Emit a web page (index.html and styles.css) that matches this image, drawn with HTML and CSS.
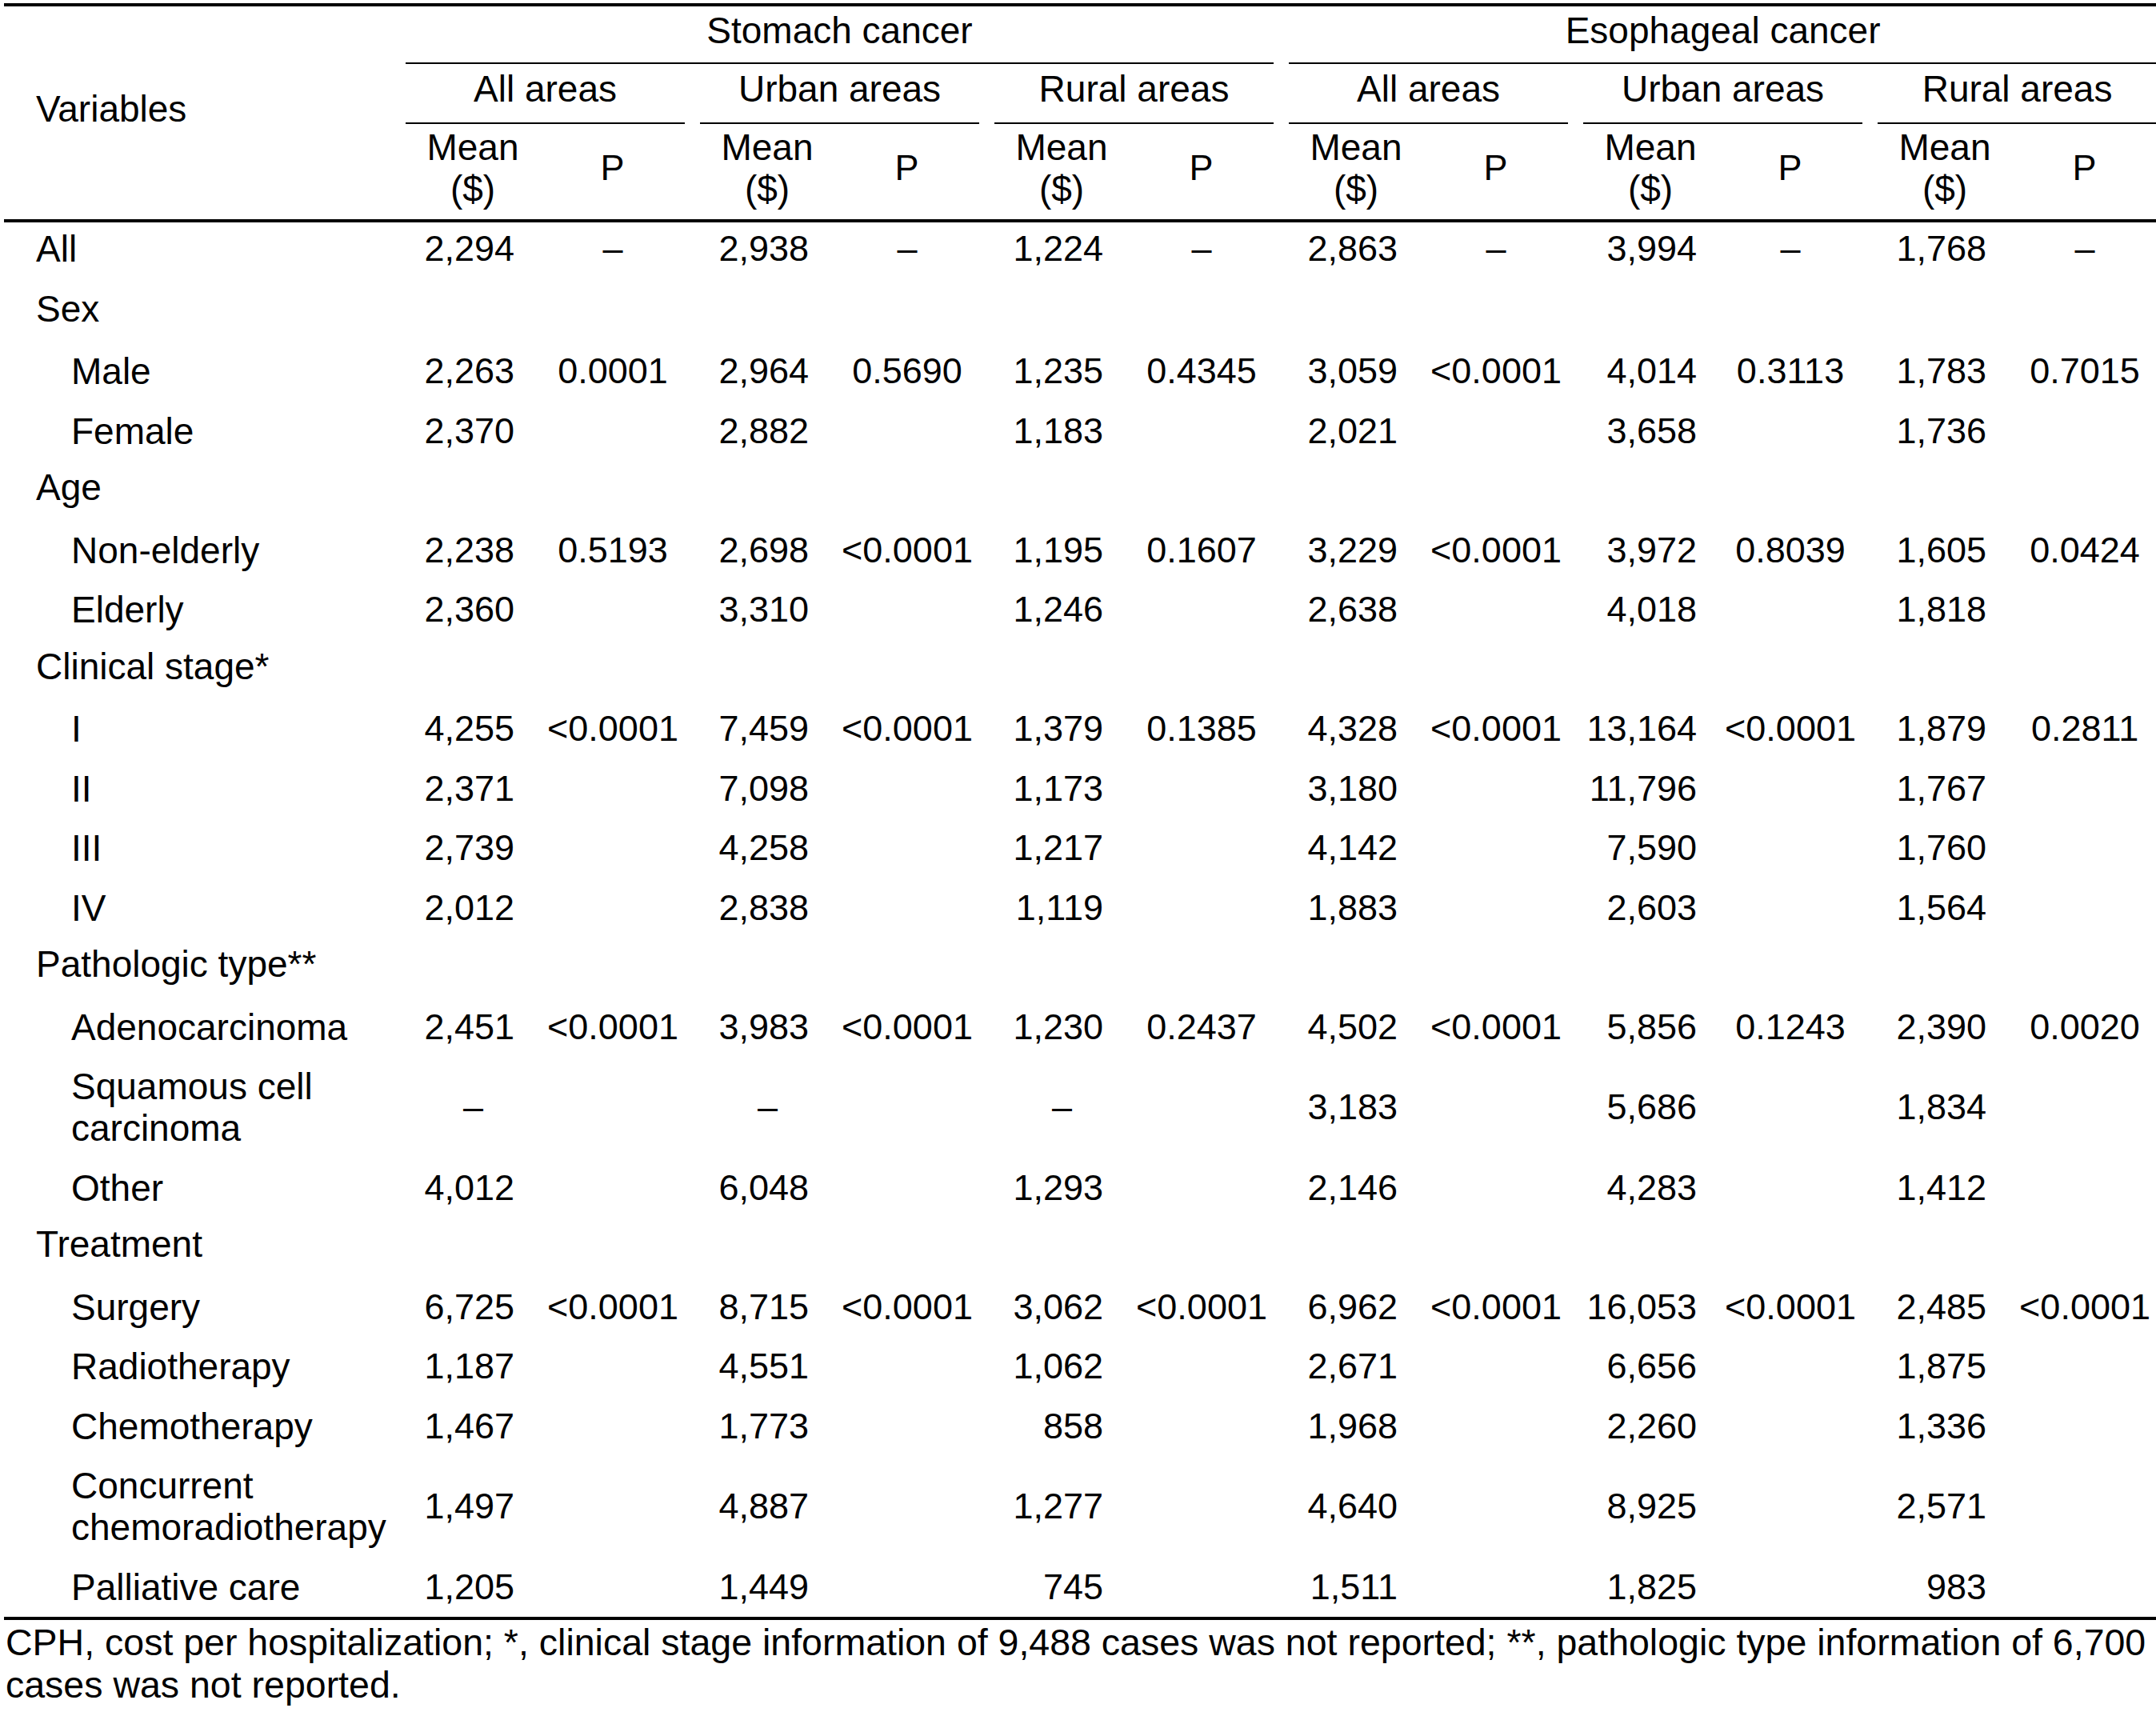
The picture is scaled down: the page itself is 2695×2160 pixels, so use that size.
FILE: index.html
```html
<!DOCTYPE html>
<html lang="en">
<head>
<meta charset="utf-8">
<title>CPH table</title>
<link rel="stylesheet" href="styles.css">
</head>
<body>
<div class="page">
<table class="data">
<colgroup>
<col class="c-var">
<col class="c-mean"><col class="c-p">
<col class="c-mean"><col class="c-p">
<col class="c-mean"><col class="c-p">
<col class="c-mean"><col class="c-p">
<col class="c-mean"><col class="c-p">
<col class="c-mean"><col class="c-p">
</colgroup>
<thead>
<tr>
<th class="h-var" rowspan="3">Variables</th>
<th class="h-span" colspan="6"><div class="ln ln-1">Stomach cancer</div></th>
<th class="h-span" colspan="6"><div class="ln ln-1">Esophageal cancer</div></th>
</tr>
<tr>
<th class="h-span" colspan="2"><div class="ln ln-2">All areas</div></th>
<th class="h-span" colspan="2"><div class="ln ln-2">Urban areas</div></th>
<th class="h-span" colspan="2"><div class="ln ln-2">Rural areas</div></th>
<th class="h-span" colspan="2"><div class="ln ln-2">All areas</div></th>
<th class="h-span" colspan="2"><div class="ln ln-2">Urban areas</div></th>
<th class="h-span" colspan="2"><div class="ln ln-2">Rural areas</div></th>
</tr>
<tr>
<th class="h-sub h-mean">Mean<br>($)</th><th class="h-sub h-p">P</th>
<th class="h-sub h-mean">Mean<br>($)</th><th class="h-sub h-p">P</th>
<th class="h-sub h-mean">Mean<br>($)</th><th class="h-sub h-p">P</th>
<th class="h-sub h-mean">Mean<br>($)</th><th class="h-sub h-p">P</th>
<th class="h-sub h-mean">Mean<br>($)</th><th class="h-sub h-p">P</th>
<th class="h-sub h-mean">Mean<br>($)</th><th class="h-sub h-p">P</th>
</tr>
</thead>
<tbody>
<tr class="first"><td class="var">All</td><td class="mean">2,294</td><td class="p">–</td><td class="mean">2,938</td><td class="p">–</td><td class="mean">1,224</td><td class="p">–</td><td class="mean">2,863</td><td class="p">–</td><td class="mean w">3,994</td><td class="p">–</td><td class="mean">1,768</td><td class="p">–</td></tr>
<tr class="cat"><td class="var">Sex</td><td></td><td></td><td></td><td></td><td></td><td></td><td></td><td></td><td></td><td></td><td></td><td></td></tr>
<tr><td class="var sub">Male</td><td class="mean">2,263</td><td class="p">0.0001</td><td class="mean">2,964</td><td class="p">0.5690</td><td class="mean">1,235</td><td class="p">0.4345</td><td class="mean">3,059</td><td class="p">&lt;0.0001</td><td class="mean w">4,014</td><td class="p">0.3113</td><td class="mean">1,783</td><td class="p">0.7015</td></tr>
<tr><td class="var sub">Female</td><td class="mean">2,370</td><td class="p"></td><td class="mean">2,882</td><td class="p"></td><td class="mean">1,183</td><td class="p"></td><td class="mean">2,021</td><td class="p"></td><td class="mean w">3,658</td><td class="p"></td><td class="mean">1,736</td><td class="p"></td></tr>
<tr class="cat"><td class="var">Age</td><td></td><td></td><td></td><td></td><td></td><td></td><td></td><td></td><td></td><td></td><td></td><td></td></tr>
<tr><td class="var sub">Non-elderly</td><td class="mean">2,238</td><td class="p">0.5193</td><td class="mean">2,698</td><td class="p">&lt;0.0001</td><td class="mean">1,195</td><td class="p">0.1607</td><td class="mean">3,229</td><td class="p">&lt;0.0001</td><td class="mean w">3,972</td><td class="p">0.8039</td><td class="mean">1,605</td><td class="p">0.0424</td></tr>
<tr><td class="var sub">Elderly</td><td class="mean">2,360</td><td class="p"></td><td class="mean">3,310</td><td class="p"></td><td class="mean">1,246</td><td class="p"></td><td class="mean">2,638</td><td class="p"></td><td class="mean w">4,018</td><td class="p"></td><td class="mean">1,818</td><td class="p"></td></tr>
<tr class="cat"><td class="var">Clinical stage*</td><td></td><td></td><td></td><td></td><td></td><td></td><td></td><td></td><td></td><td></td><td></td><td></td></tr>
<tr><td class="var sub">I</td><td class="mean">4,255</td><td class="p">&lt;0.0001</td><td class="mean">7,459</td><td class="p">&lt;0.0001</td><td class="mean">1,379</td><td class="p">0.1385</td><td class="mean">4,328</td><td class="p">&lt;0.0001</td><td class="mean w">13,164</td><td class="p">&lt;0.0001</td><td class="mean">1,879</td><td class="p">0.2811</td></tr>
<tr><td class="var sub">II</td><td class="mean">2,371</td><td class="p"></td><td class="mean">7,098</td><td class="p"></td><td class="mean">1,173</td><td class="p"></td><td class="mean">3,180</td><td class="p"></td><td class="mean w">11,796</td><td class="p"></td><td class="mean">1,767</td><td class="p"></td></tr>
<tr><td class="var sub">III</td><td class="mean">2,739</td><td class="p"></td><td class="mean">4,258</td><td class="p"></td><td class="mean">1,217</td><td class="p"></td><td class="mean">4,142</td><td class="p"></td><td class="mean w">7,590</td><td class="p"></td><td class="mean">1,760</td><td class="p"></td></tr>
<tr><td class="var sub">IV</td><td class="mean">2,012</td><td class="p"></td><td class="mean">2,838</td><td class="p"></td><td class="mean">1,119</td><td class="p"></td><td class="mean">1,883</td><td class="p"></td><td class="mean w">2,603</td><td class="p"></td><td class="mean">1,564</td><td class="p"></td></tr>
<tr class="cat"><td class="var">Pathologic type**</td><td></td><td></td><td></td><td></td><td></td><td></td><td></td><td></td><td></td><td></td><td></td><td></td></tr>
<tr><td class="var sub">Adenocarcinoma</td><td class="mean">2,451</td><td class="p">&lt;0.0001</td><td class="mean">3,983</td><td class="p">&lt;0.0001</td><td class="mean">1,230</td><td class="p">0.2437</td><td class="mean">4,502</td><td class="p">&lt;0.0001</td><td class="mean w">5,856</td><td class="p">0.1243</td><td class="mean">2,390</td><td class="p">0.0020</td></tr>
<tr><td class="var sub">Squamous cell<br>carcinoma</td><td class="mean dash">–</td><td class="p"></td><td class="mean dash">–</td><td class="p"></td><td class="mean dash">–</td><td class="p"></td><td class="mean">3,183</td><td class="p"></td><td class="mean w">5,686</td><td class="p"></td><td class="mean">1,834</td><td class="p"></td></tr>
<tr><td class="var sub">Other</td><td class="mean">4,012</td><td class="p"></td><td class="mean">6,048</td><td class="p"></td><td class="mean">1,293</td><td class="p"></td><td class="mean">2,146</td><td class="p"></td><td class="mean w">4,283</td><td class="p"></td><td class="mean">1,412</td><td class="p"></td></tr>
<tr class="cat"><td class="var">Treatment</td><td></td><td></td><td></td><td></td><td></td><td></td><td></td><td></td><td></td><td></td><td></td><td></td></tr>
<tr><td class="var sub">Surgery</td><td class="mean">6,725</td><td class="p">&lt;0.0001</td><td class="mean">8,715</td><td class="p">&lt;0.0001</td><td class="mean">3,062</td><td class="p">&lt;0.0001</td><td class="mean">6,962</td><td class="p">&lt;0.0001</td><td class="mean w">16,053</td><td class="p">&lt;0.0001</td><td class="mean">2,485</td><td class="p">&lt;0.0001</td></tr>
<tr><td class="var sub">Radiotherapy</td><td class="mean">1,187</td><td class="p"></td><td class="mean">4,551</td><td class="p"></td><td class="mean">1,062</td><td class="p"></td><td class="mean">2,671</td><td class="p"></td><td class="mean w">6,656</td><td class="p"></td><td class="mean">1,875</td><td class="p"></td></tr>
<tr><td class="var sub">Chemotherapy</td><td class="mean">1,467</td><td class="p"></td><td class="mean">1,773</td><td class="p"></td><td class="mean">858</td><td class="p"></td><td class="mean">1,968</td><td class="p"></td><td class="mean w">2,260</td><td class="p"></td><td class="mean">1,336</td><td class="p"></td></tr>
<tr><td class="var sub">Concurrent<br>chemoradiotherapy</td><td class="mean">1,497</td><td class="p"></td><td class="mean">4,887</td><td class="p"></td><td class="mean">1,277</td><td class="p"></td><td class="mean">4,640</td><td class="p"></td><td class="mean w">8,925</td><td class="p"></td><td class="mean">2,571</td><td class="p"></td></tr>
<tr class="last"><td class="var sub">Palliative care</td><td class="mean">1,205</td><td class="p"></td><td class="mean">1,449</td><td class="p"></td><td class="mean">745</td><td class="p"></td><td class="mean">1,511</td><td class="p"></td><td class="mean w">1,825</td><td class="p"></td><td class="mean">983</td><td class="p"></td></tr>
</tbody>
</table>
<p class="note">CPH, cost per hospitalization; *, clinical stage information of 9,488 cases was not reported; **, pathologic type information of 6,700 cases was not reported.</p>
</div>
</body>
</html>
```

FILE: styles.css
```css
html, body {
  margin: 0;
  padding: 0;
  overflow: hidden;
  background: #ffffff;
}

body {
  font-family: "Liberation Sans", Arial, Helvetica, sans-serif;
  font-size: 45px;
  color: #000000;
}

.page {
  padding: 4px 0 0 5px;
  width: 2720px;
}

.data {
  border-collapse: separate;
  border-spacing: 0;
  table-layout: fixed;
  width: 2710px;
  border-top: 4px solid #000000;
}

.c-var { width: 502px; }
.c-mean { width: 168px; }
.c-p { width: 200px; }

th {
  font-weight: normal;
  padding: 0;
}

.h-var {
  text-align: left;
  padding: 0 0 10px 40px;
  font-size: 46px;
  vertical-align: middle;
  line-height: 52px;
  border-bottom: 4px solid #000000;
}

.h-span {
  padding: 0;
  vertical-align: top;
}

.ln {
  margin-right: 19px;
  border-bottom: 2px solid #000000;
  text-align: center;
  white-space: nowrap;
  font-size: 46px;
}

.ln-1 {
  height: 70px;
  line-height: 60px;
}

.ln-2 {
  height: 73px;
  line-height: 63px;
}

.h-sub {
  height: 109px;
  padding-bottom: 10px;
  line-height: 52px;
  vertical-align: middle;
  text-align: center;
  border-bottom: 4px solid #000000;
}

.h-mean {
  font-size: 46px;
}

.h-p {
  padding-right: 19px;
}

td {
  padding-top: 11px;
  padding-bottom: 11.5px;
  line-height: 52px;
  vertical-align: middle;
  white-space: nowrap;
}

.first td {
  padding-top: 7px;
  padding-bottom: 15.5px;
}

.cat td {
  padding-top: 7px;
  padding-bottom: 15.5px;
}

.var {
  padding-left: 40px;
  text-align: left;
  font-size: 46px;
}

.var.sub {
  padding-left: 84px;
}

.mean {
  text-align: right;
  padding-right: 32px;
}

.mean.w {
  padding-right: 26px;
}

.mean.dash {
  text-align: center;
  padding-right: 0;
}

.p {
  text-align: center;
  padding-right: 19px;
}

.last td {
  border-bottom: 4px solid #000000;
}

.note {
  margin: 2px 0 0 2px;
  width: 2688px;
  font-size: 46.5px;
  line-height: 53px;
}
```
